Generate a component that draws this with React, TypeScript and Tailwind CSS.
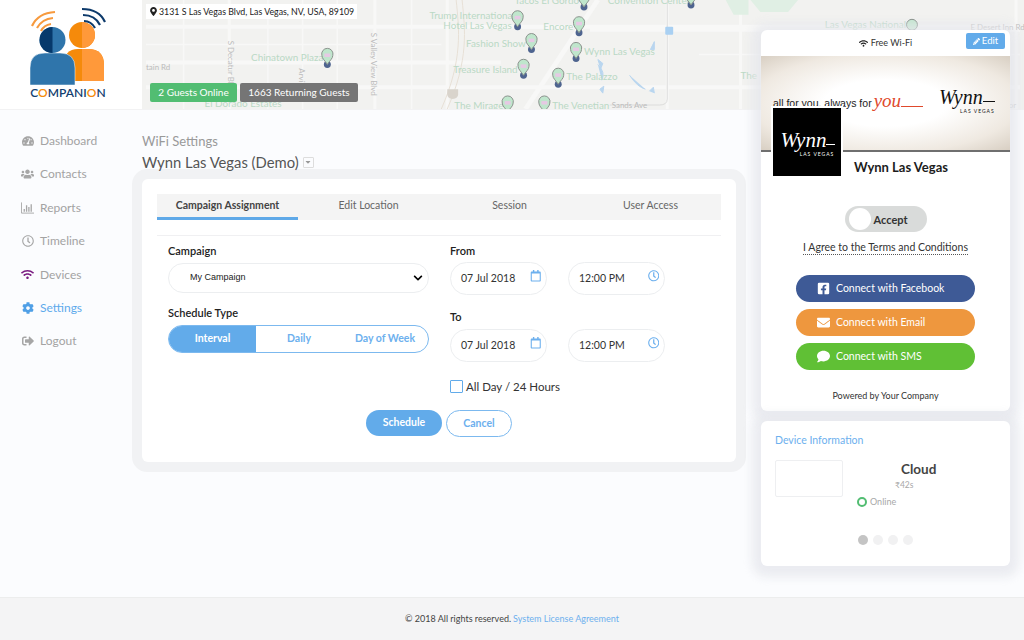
import { FaCog, FaComment, FaEnvelope, FaFacebookSquare, FaMapMarkerAlt, FaPencilAlt, FaSignOutAlt, FaTachometerAlt, FaUsers, FaWifi, FaChevronDown, FaRegCalendar, FaRegClock, FaCaretDown } from "react-icons/fa";
import type { ReactNode } from "react";

const pins: [number, number][] = [
  [325, 57], [517, 19], [579, 25], [531, 42], [576, 51], [523, 68], [558, 77], [507, 105], [544, 105], [584, -1], [692, -3],
];

const labels: [string, number, number][] = [
  ["Chinatown Plaza", 248, 62],
  ["El Dorado Estates", 201, 108],
  ["Trump International", 428, 19.500],
  ["Hotel Las Vegas", 442, 29],
  ["Encore", 543, 30],
  ["Fashion Show", 465, 47],
  ["Wynn Las Vegas", 584, 56],
  ["Treasure Island", 452, 74],
  ["The Palazzo", 566, 81],
  ["The Mirage", 453, 110],
  ["The Venetian", 552, 110],
  ["Tacos El Gordo", 514, 4],
  ["Convention Center", 608, 4],
  ["Las Vegas National", 827, 28],
  ["The", 742, 80],
];

function CityMap() {
  return (
    <svg viewBox="142 0 882 110" className="h-full w-full bg-[#f2f2f0]">
      <g stroke="#f8f8f7" fill="none">
        <path d="M142 27H1024M142 63H500M590 30H1024M142 88H1024" strokeWidth="4" />
        <path d="M226 0V110M373 0V110M446 0V110M668 0V110M742 0V110M1020 0V110" strokeWidth="3" />
        <path d="M180 0V110M265 0V110M300 0V110M335 0V110M410 0V110M520 28H560M142 45H440M700 55H1024" strokeWidth="1.500" />
        <path d="M598 0L525 110" strokeWidth="5" />
      </g>
      <path d="M455 0C458 30 462 60 440 110M461 0C464 30 468 60 446 110" stroke="#e7e0d6" fill="none" />
      <path d="M668 0V100Q668 106 660 106H610" stroke="#dcdcdb" fill="none" />
      <path d="M727 0H750V15H735ZM752 0H800L790 12H762Z" fill="#e0efe4" />
      <path d="M655 42l-4 8 4 0zM598 60l5 4-2 5zM600 90l4-3-1 7zM630 76q8 12 16 14M650 92l4-4 1 6M598 65q8 8 4 16" fill="#b9d6ef" stroke="#b9d6ef" />
      <rect x="666" y="27" width="8" height="8" rx="1" fill="#a9d0f2" />
      <path d="M446 90H457V95Q457 99 451.500 100Q446 99 446 95Z" fill="#d9d4cc" />
      <g fontFamily="Lato, sans-serif" fontSize="10" fill="#bad9c5">
        {labels.map(([text, x, y]) => (
          <text key={text} x={x} y={y}>{text}</text>
        ))}
      </g>
      <g fontFamily="Lato, sans-serif" fontSize="8" fill="#bcbcbc">
        <text x="142" y="71">tain Rd</text>
        <text x="612" y="109">Sands Ave</text>
        <text x="974" y="30">E Desert Inn Rd</text>
        <text x="1010" y="109">ror</text>
        <text transform="translate(225 41) rotate(90)">S Decatur Blvd</text>
        <text transform="translate(369 33) rotate(90)">S Valley View Blvd</text>
        <text transform="translate(296 69) rotate(90)">Arville</text>
      </g>
      <circle cx="915" cy="25" r="5.500" fill="#bfe6cc" stroke="#767f78" />
      {pins.map(([x, y]) => (
        <g key={`${x}-${y}`}>
          <circle cx={x} cy={y + 8} r="3.500" fill="#4e648f" />
          <path d={`M${x - 5.500} ${y - 1}a5.700 5.700 0 1 1 11 0c0 3-3 5-5.500 9c-2.500-4-5.500-6-5.500-9z`} fill="#bfe6cc" stroke="#8a918c" />
          <rect x={x - 3} y={y - 3} width="6" height="3.500" fill="#e6c9e4" />
        </g>
      ))}
    </svg>
  );
}

function Logo() {
  return (
    <div className="flex w-[142px] shrink-0 flex-col items-center bg-white pt-[7px]">
      <svg viewBox="0 0 142 80" className="h-[80px] w-[142px]">
        <path d="M64 74V58Q64 42 78 42H88Q104 42 104 58V74Z" fill="#f58a0b" />
        <path d="M82 42H88Q104 42 104 58V74H82Z" fill="#ff993a" />
        <path d="M30 78V61Q30 46 45 46H60Q75 46 75 61V78Q75 78 72 78Z" fill="#2f75ab" stroke="#fff" strokeWidth="0.500" />
        <circle cx="82" cy="28" r="13" fill="#f58a0b" />
        <path d="M82 15a13 13 0 0 1 0 26z" fill="#ff993a" />
        <circle cx="52.500" cy="33" r="13" fill="#2f75ab" />
        <path d="M52.500 20a13 13 0 0 0 0 26z" fill="#06396b" />
        <g fill="none" stroke="#f79a3e" strokeWidth="2.200">
          <path d="M32 19Q38 6 55 5" />
          <path d="M37 21Q42 12 53 11" />
          <path d="M41 24Q44 18 51 17" />
        </g>
        <g fill="none" stroke="#0d3a6b" strokeWidth="2.200">
          <path d="M82 2Q99 2 105 15" />
          <path d="M83 8Q95 8 100 18" />
          <path d="M84 14Q91 14 95 21" />
        </g>
      </svg>
      <div className="pr-[6px] font-['Lato',sans-serif] text-[12px] leading-[12px] font-semibold tracking-[0.05px] text-[#12406f]">
        C<span className="text-[#f58a0b]">O</span>MPANI<span className="text-[#f58a0b]">O</span>N
      </div>
    </div>
  );
}

function ChartIcon() {
  return (
    <svg viewBox="0 0 14 12" className="h-[12px] w-[14px]" fill="none" stroke="currentColor">
      <path d="M.5 0V11.500H14" />
      <path d="M3.500 10V7M6 10V3M8.500 10V5M11 10V2" strokeWidth="1.400" />
    </svg>
  );
}

const nav: { label: string; icon: ReactNode; cls?: string; iconCls?: string }[] = [
  { label: "Dashboard", icon: <FaTachometerAlt /> },
  { label: "Contacts", icon: <FaUsers className="text-[14px]" /> },
  { label: "Reports", icon: <ChartIcon /> },
  { label: "Timeline", icon: <FaRegClock /> },
  { label: "Devices", icon: <FaWifi className="text-[13px]" />, iconCls: "text-[#7b1d82]" },
  { label: "Settings", icon: <FaCog />, cls: "text-[#5eaaec]", iconCls: "text-[#4f9fe6]" },
  { label: "Logout", icon: <FaSignOutAlt /> },
];

function Sidebar() {
  return (
    <nav className="flex w-[142px] shrink-0 flex-col gap-[13.4px] pt-[21px] pl-[21px]">
      {nav.map((item) => (
        <div key={item.label} className={`flex h-[20px] items-center gap-[6px] text-[12px] ${item.cls ?? "text-[#a3a3a3]"}`}>
          <span className={`flex w-[13px] justify-center text-[12px] ${item.iconCls ?? "text-[#a6a6a6]"}`}>{item.icon}</span>
          {item.label}
        </div>
      ))}
    </nav>
  );
}

function Field({ value, icon }: { value: string; icon: ReactNode }) {
  return (
    <div className="relative flex h-[33px] w-[97px] items-center rounded-full border border-[#eceef0] bg-white pt-[1px] pl-[10px] text-[10.500px] text-[#333]">
      {value}
      <span className="absolute top-[7px] right-[5px] text-[11.500px] text-[#6db0ee]">{icon}</span>
    </div>
  );
}

function ScheduleCard() {
  return (
    <div className="h-[283px] w-[594px] rounded-[6px] bg-white px-[15px] pt-[15px] shadow-[0_0_0_10px_#f1f2f4]">
      <div className="grid h-[26px] grid-cols-4 bg-[#f4f4f4] text-center text-[10.500px] leading-[22px] text-[#666]">
        <div className="border-b-[3px] border-[#5fa9e8] font-bold text-[#444]">Campaign Assignment</div>
        <div>Edit Location</div>
        <div>Session</div>
        <div>User Access</div>
      </div>
      <div className="mt-[15px] border-t border-[#f0f0f2] px-[11px] pt-[7px]">
        <div className="flex gap-[21px]">
          <div className="w-[261px]">
            <div className="text-[11px] leading-[15px] font-semibold text-[#222]">Campaign</div>
            <div className="mt-[5px] flex h-[30px] items-center justify-between rounded-full border border-[#eceef0] pr-[5px] pl-[21px] font-['Liberation_Sans',sans-serif] text-[9px] text-[#222]">
              My Campaign
              <FaChevronDown className="text-[10px] text-black" />
            </div>
            <div className="mt-[12px] text-[11px] leading-[15px] font-semibold text-[#222]">Schedule Type</div>
            <div className="mt-[5px] grid h-[28px] grid-cols-[87px_86px_1fr] items-center rounded-full border border-[#7cb9ef] text-center text-[10.500px] font-bold text-[#6db0ee]">
              <div className="flex h-full items-center justify-center rounded-l-full bg-[#62abea] text-white">Interval</div>
              <div>Daily</div>
              <div>Day of Week</div>
            </div>
          </div>
          <div>
            <div className="text-[11px] leading-[15px] font-semibold text-[#222]">From</div>
            <div className="mt-[4px] flex gap-[21px]">
              <Field value="07 Jul 2018" icon={<FaRegCalendar />} />
              <Field value="12:00 PM" icon={<FaRegClock />} />
            </div>
            <div className="mt-[14px] text-[11px] leading-[15px] font-semibold text-[#222]">To</div>
            <div className="mt-[5px] flex gap-[21px]">
              <Field value="07 Jul 2018" icon={<FaRegCalendar />} />
              <Field value="12:00 PM" icon={<FaRegClock />} />
            </div>
            <div className="mt-[16px] flex items-center gap-[3px] text-[11.500px] text-[#333]">
              <span className="size-[13px] rounded-[1px] border-[1.5px] border-[#62abea]" />
              All Day / 24 Hours
            </div>
          </div>
        </div>
        <div className="mt-[15px] flex justify-center gap-[4px] text-[10.500px] font-bold">
          <button type="button" className="h-[26px] w-[76px] rounded-full bg-[#62abea] text-white">Schedule</button>
          <button type="button" className="h-[27px] w-[66px] rounded-full border border-[#7cb9ef] bg-white text-[#6db0ee]">Cancel</button>
        </div>
      </div>
    </div>
  );
}

function ConnectButton({ cls, icon, label }: { cls: string; icon: ReactNode; label: string }) {
  return (
    <div className={`flex h-[26.500px] items-center gap-[6px] rounded-full pl-[21px] text-[10.500px] text-white ${cls}`}>
      <span className="flex w-[13px] justify-center text-[13px]">{icon}</span>
      <span className="pt-[1px]">{label}</span>
    </div>
  );
}

function PreviewCard() {
  return (
    <div className="h-[381px] w-[249px] rounded-[6px] bg-white shadow-[0_2px_10px_9px_rgba(230,231,236,0.75)]">
      <div className="relative flex h-[26px] items-center justify-center gap-[3px] text-[9px] text-[#333]">
        <FaWifi className="text-[9px] text-[#222]" />
        Free Wi-Fi
        <span className="absolute top-[3px] right-[5px] flex h-[16px] w-[39px] items-center justify-center gap-[2px] rounded-[2px] bg-[#62abea] text-[9.500px] text-white">
          <FaPencilAlt className="text-[7px]" />
          Edit
        </span>
      </div>
      <div className="relative h-[96px] border-b-2 border-[#6f6f6f] bg-[radial-gradient(ellipse_at_center,#ffffff_35%,#efe9e1_75%,#d8cfc3_100%)]">
        <div className="absolute top-[40px] left-[12px] flex items-baseline gap-[2px] font-['Liberation_Sans',sans-serif] text-[10.500px] whitespace-nowrap text-[#222]">
          all for you. always for
          <span className="font-['Liberation_Serif',serif] text-[19px] leading-[10px] text-[#e0492c] italic">you</span>
          <span className="-ml-[2px] h-px w-[22px] bg-[#e0492c]" />
        </div>
        <div className="absolute top-[30px] left-[178px] leading-none text-[#111]">
          <div className="flex items-end font-['Liberation_Serif',serif] text-[20px] leading-[23px] italic">
            Wynn
            <span className="mb-[7px] h-px w-[12px] bg-[#111]" />
          </div>
          <div className="pl-[21px] text-[5px] tracking-[1px]">LAS VEGAS</div>
        </div>
        <div className="absolute top-[52px] left-[12px] flex size-[68px] flex-col items-center justify-center bg-black pl-[2px] leading-none text-white shadow-[0_0_0_2px_#fff]">
          <div className="flex items-end font-['Liberation_Serif',serif] text-[21px] leading-[24px] italic">
            Wynn
            <span className="mb-[7px] h-px w-[9px] bg-white" />
          </div>
          <div className="pl-[18px] text-[5px] tracking-[1px]">LAS VEGAS</div>
        </div>
      </div>
      <div className="pt-[6px] pl-[93px] text-[13px] leading-[18px] font-bold text-[#1c1c1c]">Wynn Las Vegas</div>
      <div className="mt-[30px] flex justify-center">
        <div className="flex h-[26px] w-[82px] items-center rounded-full bg-[#d9dbda] pl-[4px] text-[11px] font-bold text-[#333]">
          <span className="size-[22px] rounded-full bg-white" />
          <span className="mt-[2px] ml-[3px]">Accept</span>
        </div>
      </div>
      <div className="mt-[9px] flex justify-center">
        <span className="border-b border-dotted border-[#555] text-[10.500px] leading-[13px] text-[#333]">I Agree to the Terms and Conditions</span>
      </div>
      <div className="mt-[20px] flex flex-col gap-[7.500px] px-[35px]">
        <ConnectButton cls="bg-[#3e5a96]" icon={<FaFacebookSquare />} label="Connect with Facebook" />
        <ConnectButton cls="bg-[#ee973e]" icon={<FaEnvelope />} label="Connect with Email" />
        <ConnectButton cls="bg-[#60c035]" icon={<FaComment />} label="Connect with SMS" />
      </div>
      <div className="mt-[19px] text-center text-[9px] text-[#333]">Powered by Your Company</div>
    </div>
  );
}

function DeviceCard() {
  return (
    <div className="relative mt-[10px] h-[145px] w-[249px] rounded-[6px] bg-white px-[14px] pt-[12px] shadow-[0_2px_10px_9px_rgba(230,231,236,0.75)]">
      <div className="text-[10.500px] leading-[14px] text-[#6db0ee]">Device Information</div>
      <div className="mt-[13px] flex">
        <div className="h-[37px] w-[68px] rounded-[2px] border border-[#eeeff1]" />
        <div className="relative flex-1">
          <div className="pt-[1px] pl-[58px] text-[13.500px] leading-[16px] font-bold text-[#444]">Cloud</div>
          <div className="overflow-hidden pt-[2px] pl-[52px] text-[8.500px] text-[#a8a8a8]">₹42s</div>
          <div className="mt-[3px] flex items-center gap-[3px] pl-[14px] text-[9px] text-[#a8a8a8]">
            <span className="size-[10px] rounded-full border-2 border-[#52bd72]" />
            Online
          </div>
        </div>
      </div>
      <div className="absolute top-[114px] left-[97px] flex gap-[5px]">
        <span className="size-[10px] rounded-full bg-[#c4c4c4]" />
        <span className="size-[10px] rounded-full bg-[#f1f1f2]" />
        <span className="size-[10px] rounded-full bg-[#f1f1f2]" />
        <span className="size-[10px] rounded-full bg-[#f1f1f2]" />
      </div>
    </div>
  );
}

export default function App() {
  return (
    <div className="flex h-[640px] w-[1024px] flex-col overflow-hidden bg-[#fbfcfe] font-['Lato',sans-serif]">
      <header className="flex h-[110px] shrink-0 border-b border-[#f2f2f3]">
        <Logo />
        <div className="relative flex-1 overflow-hidden">
          <CityMap />
          <div className="absolute top-[4px] left-[4px] flex h-[15px] items-center gap-[1px] bg-white px-[3px] text-[8.800px] whitespace-nowrap text-[#222]">
            <FaMapMarkerAlt className="text-[9px]" />
            3131 S Las Vegas Blvd, Las Vegas, NV, USA, 89109
          </div>
          <div className="absolute top-[83px] left-[8px] flex gap-[3px] text-[10px] text-white">
            <span className="flex h-[19px] w-[87px] items-center justify-center rounded-[2px] bg-[#52bd72]">2 Guests Online</span>
            <span className="flex h-[19px] w-[118px] items-center justify-center rounded-[2px] bg-[#757575]">1663 Returning Guests</span>
          </div>
        </div>
      </header>
      <div className="flex flex-1">
        <Sidebar />
        <main className="flex-1 pt-[21px]">
          <div className="text-[13px] leading-[20px] text-[#999]">WiFi Settings</div>
          <div className="flex items-center gap-[4px] text-[14.800px] leading-[22px] text-[#555]">
            Wynn Las Vegas (Demo)
            <span className="flex size-[11px] items-center justify-center rounded-[1px] border border-[#ddd] text-[8px] text-[#999]">
              <FaCaretDown />
            </span>
          </div>
          <div className="mt-[6px]">
            <ScheduleCard />
          </div>
        </main>
        <aside className="relative z-10 mr-[14px] -mt-[80px] w-[249px]">
          <PreviewCard />
          <DeviceCard />
        </aside>
      </div>
      <footer className="flex h-[43px] shrink-0 items-center justify-center gap-[2px] border-t border-[#eceded] bg-[#f4f4f5] text-[9px] text-[#444]">
        © 2018 All rights reserved.
        <span className="text-[#6db0ee]">System License Agreement</span>
      </footer>
    </div>
  );
}
